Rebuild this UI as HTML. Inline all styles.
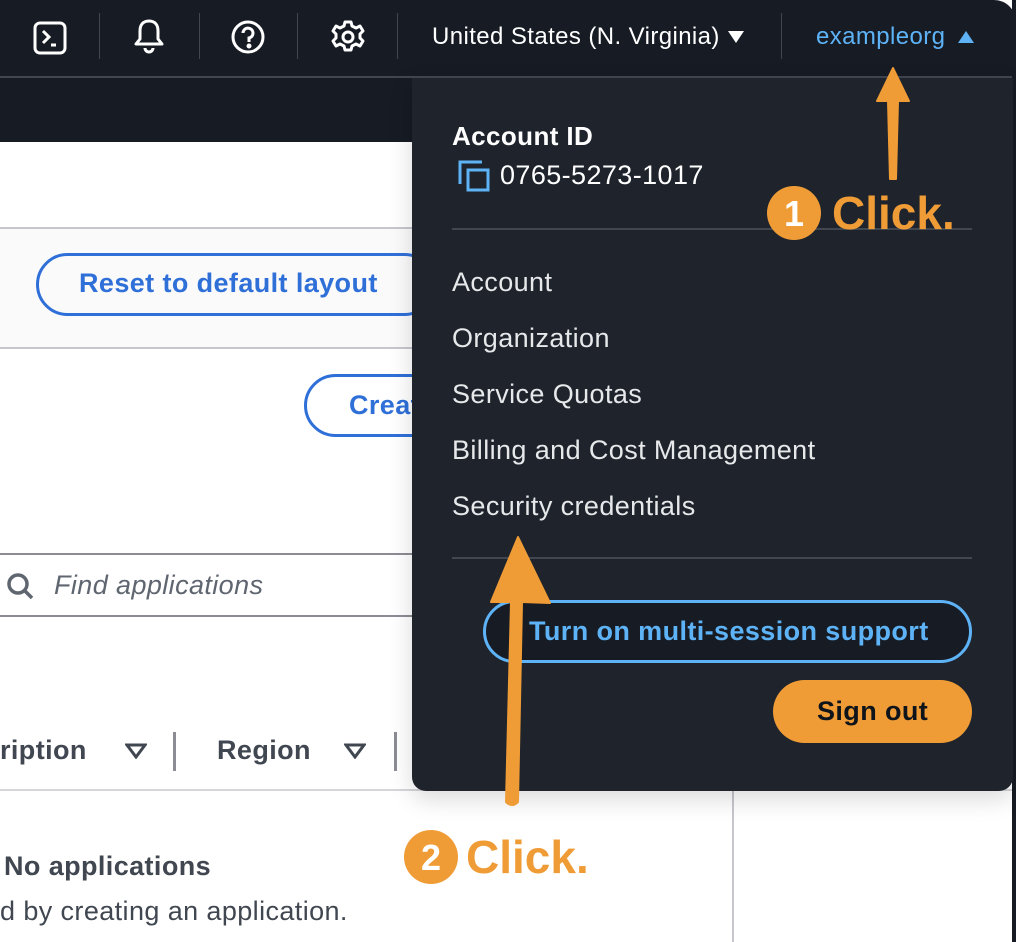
<!DOCTYPE html>
<html><head><style>
*{margin:0;padding:0;box-sizing:border-box}
body{width:1016px;height:942px;overflow:hidden;background:#fff;font-family:"Liberation Sans",sans-serif;position:relative}
.abs{position:absolute}
.top{left:0;top:0;width:1016px;height:77px;background:#161b24;border-radius:0 22px 0 0}
.sep{position:absolute;top:13px;width:1px;height:46px;background:#414750}
.panel{left:412px;top:78px;width:601px;height:713px;background:#1e232c;border-radius:0 0 14px 14px;box-shadow:0 8px 24px rgba(0,0,0,.15)}
.menu{position:absolute;left:40px;color:#e6e8ea;font-size:27px;letter-spacing:.4px}
.t{position:absolute;white-space:nowrap;letter-spacing:.4px}
</style></head><body>
<div class="abs top"></div>
<div class="abs" style="left:0;top:76px;width:1016px;height:2px;background:#414750"></div>
<div class="abs" style="left:0;top:78px;width:1016px;height:64px;background:#161b24"></div>
<svg class="abs" style="left:32px;top:20px" width="36" height="36" viewBox="0 0 36 36" fill="none" stroke="#fff" stroke-width="3"><rect x="3" y="3" width="30" height="30" rx="5"/><path d="M11 11l6 6-6 6" /><path d="M19 25h5"/></svg>
<div class="sep" style="left:99px"></div>
<svg class="abs" style="left:132px;top:18px" width="34" height="36" viewBox="0 0 34 36" fill="none" stroke="#fff" stroke-width="3" stroke-linejoin="round"><path d="M17 3c-6 0-9 4-9 10v8l-4 5h26l-4-5v-8c0-6-3-10-9-10z"/><path d="M13 30a4 4 0 008 0"/></svg>
<div class="sep" style="left:199px"></div>
<svg class="abs" style="left:230px;top:19px" width="36" height="36" viewBox="0 0 36 36" fill="none" stroke="#fff" stroke-width="3"><circle cx="18" cy="18" r="15"/><path d="M13 14a5 5 0 1 1 6 5v4"/><circle cx="19" cy="27" r="1" fill="#fff"/></svg>
<div class="sep" style="left:297px"></div>
<svg class="abs" style="left:330px;top:19px" width="36" height="36" viewBox="0 0 36 36" fill="none" stroke="#fff" stroke-width="3"><path d="M15 3h6l1 4 4 2 4-2 3 5-3 3v4l3 3-3 5-4-2-4 2-1 4h-6l-1-4-4-2-4 2-3-5 3-3v-4l-3-3 3-5 4 2 4-2z" stroke-linejoin="round"/><circle cx="18" cy="18" r="5"/></svg>
<div class="sep" style="left:397px"></div>
<div class="t" style="left:432px;top:23px;color:#fff;font-size:24px">United States (N. Virginia)</div>
<svg class="abs" style="left:727px;top:30px" width="18" height="14"><path d="M1 1h16l-8 12z" fill="#fff"/></svg>
<div class="sep" style="left:781px"></div>
<div class="t" style="left:816px;top:23px;color:#5eb3f6;font-size:24px">exampleorg</div>
<svg class="abs" style="left:957px;top:30px" width="18" height="14"><path d="M1 13h16l-8-12z" fill="#5eb3f6"/></svg>

<div class="abs" style="left:0;top:227px;width:412px;height:2px;background:#c6c6cd"></div>
<div class="abs" style="left:0;top:229px;width:412px;height:119px;background:#fafafb"></div>
<div class="abs" style="left:0;top:347px;width:412px;height:2px;background:#c6c6cd"></div>
<div class="abs" style="left:36px;top:253px;width:400px;height:63px;border:3px solid #2f6fd8;border-radius:32px"></div>
<div class="t" style="left:79px;top:268px;color:#2f6fd8;font-size:27px;font-weight:bold">Reset to default layout</div>
<div class="abs" style="left:304px;top:374px;width:200px;height:63px;border:3px solid #2f6fd8;border-radius:32px"></div>
<div class="t" style="left:349px;top:390px;color:#2f6fd8;font-size:27px;font-weight:bold">Creat</div>
<div class="abs" style="left:0;top:553px;width:412px;height:2px;background:#8c8c94"></div>
<div class="abs" style="left:0;top:615px;width:412px;height:2px;background:#8c8c94"></div>
<svg class="abs" style="left:6px;top:572px" width="30" height="30" fill="none" stroke="#5f6670" stroke-width="3.5"><circle cx="12" cy="12" r="9"/><path d="M19 19l7 7"/></svg>
<div class="t" style="left:54px;top:570px;color:#5f6670;font-size:27px;font-style:italic">Find applications</div>
<div class="t" style="left:0;top:735px;color:#414750;font-size:27px;font-weight:bold">ription</div>
<svg class="abs" style="left:125px;top:743px" width="22" height="16"><path d="M2 2h18l-9 12z" fill="none" stroke="#414750" stroke-width="3"/></svg>
<div class="abs" style="left:173px;top:732px;width:3px;height:39px;background:#8c8c94"></div>
<div class="t" style="left:217px;top:735px;color:#414750;font-size:27px;font-weight:bold">Region</div>
<svg class="abs" style="left:344px;top:743px" width="22" height="16"><path d="M2 2h18l-9 12z" fill="none" stroke="#414750" stroke-width="3"/></svg>
<div class="abs" style="left:394px;top:732px;width:3px;height:39px;background:#8c8c94"></div>
<div class="abs" style="left:0;top:789px;width:1016px;height:2px;background:#d5d5da"></div>
<div class="abs" style="left:732px;top:790px;width:2px;height:152px;background:#c6c6cd"></div>
<div class="t" style="left:4px;top:851px;color:#414750;font-size:27px;font-weight:bold">No applications</div>
<div class="t" style="left:0;top:896px;color:#414750;font-size:27px">d by creating an application.</div>
<div class="abs" style="left:1012px;top:0;width:4px;height:942px;background:#161b24"></div>

<div class="abs panel">
<div class="t" style="left:40px;top:43px;color:#fff;font-size:26px;font-weight:bold">Account ID</div>
<svg class="abs" style="left:46px;top:82px" width="34" height="34" fill="none" stroke="#5eb3f6" stroke-width="3"><path d="M2 24V2h22"/><rect x="10" y="10" width="20" height="20"/></svg>
<div class="t" style="left:88px;top:82px;color:#fff;font-size:27px">0765-5273-1017</div>
<div class="abs" style="left:40px;top:150px;width:520px;height:2px;background:#414750"></div>
<div class="menu" style="top:189px">Account</div>
<div class="menu" style="top:245px">Organization</div>
<div class="menu" style="top:301px">Service Quotas</div>
<div class="menu" style="top:357px">Billing and Cost Management</div>
<div class="menu" style="top:413px">Security credentials</div>
<div class="abs" style="left:40px;top:479px;width:520px;height:2px;background:#414750"></div>
<div class="abs" style="left:71px;top:522px;width:489px;height:63px;border:3px solid #5eb3f6;border-radius:32px;background:#161b24"></div>
<div class="t" style="left:117px;top:538px;color:#5eb3f6;font-size:27px;font-weight:bold">Turn on multi-session support</div>
<div class="abs" style="left:361px;top:602px;width:199px;height:63px;border-radius:32px;background:#f09c36"></div>
<div class="t" style="left:405px;top:618px;color:#0f141a;font-size:27px;font-weight:bold">Sign out</div>
</div>

<svg class="abs" style="left:0;top:0" width="1016" height="942">
<path d="M893 68l-16 33h11l2 78h6l2-78h11z" fill="#f09c36" stroke="#f09c36" stroke-linejoin="round" stroke-width="2"/>
<path d="M518 537l-27 65 20 0 -5 200q6 6 12 0l4-200 28 1z" fill="#f09c36" stroke="#f09c36" stroke-width="2" stroke-linejoin="round"/>
<circle cx="794" cy="213" r="27" fill="#f09c36"/>
<circle cx="431" cy="857" r="27" fill="#f09c36"/>
<text x="794" y="226" fill="#fff" font-family="Liberation Sans" font-weight="bold" font-size="36" text-anchor="middle">1</text>
<text x="431" y="870" fill="#fff" font-family="Liberation Sans" font-weight="bold" font-size="36" text-anchor="middle">2</text>
<text x="832" y="229" fill="#f09c36" font-family="Liberation Sans" font-weight="bold" font-size="46">Click.</text>
<text x="466" y="873" fill="#f09c36" font-family="Liberation Sans" font-weight="bold" font-size="46">Click.</text>
</svg>
</body></html>
